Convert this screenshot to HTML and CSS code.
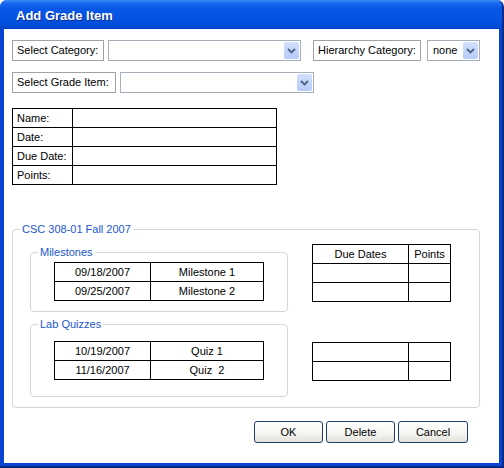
FILE: index.html
```html
<!DOCTYPE html>
<html>
<head>
  <title>Add Grade Item</title>
  <link rel="stylesheet" href="styles.css">
</head>
<body>
  <div class="window">
    <div class="title-bar">Add Grade Item</div>
    <div class="client">
      <div class="form-row">
        <span class="field-label label-category">Select Category:</span>
        <div class="combo combo-category">
          <span class="combo-value"></span>
          <span class="combo-button"><svg width="9" height="6" viewBox="0 0 9 6"><path d="M1 1 L4.5 4.5 L8 1" fill="none" stroke="#4d6185" stroke-width="1.8"/></svg></span>
        </div>
        <span class="field-label label-hierarchy">Hierarchy Category:</span>
        <div class="combo combo-hierarchy">
          <span class="combo-value">none</span>
          <span class="combo-button"><svg width="9" height="6" viewBox="0 0 9 6"><path d="M1 1 L4.5 4.5 L8 1" fill="none" stroke="#4d6185" stroke-width="1.8"/></svg></span>
        </div>
      </div>
      <div class="form-row">
        <span class="field-label label-item">Select Grade Item:</span>
        <div class="combo combo-item">
          <span class="combo-value"></span>
          <span class="combo-button"><svg width="9" height="6" viewBox="0 0 9 6"><path d="M1 1 L4.5 4.5 L8 1" fill="none" stroke="#4d6185" stroke-width="1.8"/></svg></span>
        </div>
      </div>

      <table class="grid-table item-table">
        <tr><td class="item-key">Name:</td><td></td></tr>
        <tr><td class="item-key">Date:</td><td></td></tr>
        <tr><td class="item-key">Due Date:</td><td></td></tr>
        <tr><td class="item-key">Points:</td><td></td></tr>
      </table>

      <fieldset class="group course-group">
        <legend>CSC 308-01 Fall 2007</legend>
        <div class="course-grid">
          <fieldset class="group sub-group milestones">
            <legend>Milestones</legend>
            <table class="grid-table entry-table">
              <tr><td class="entry-date">09/18/2007</td><td>Milestone 1</td></tr>
              <tr><td class="entry-date">09/25/2007</td><td>Milestone 2</td></tr>
            </table>
          </fieldset>
          <table class="grid-table side-table side-first">
            <tr><td class="side-wide">Due Dates</td><td>Points</td></tr>
            <tr><td class="side-wide"></td><td></td></tr>
            <tr><td class="side-wide"></td><td></td></tr>
          </table>
          <fieldset class="group sub-group quizzes">
            <legend>Lab Quizzes</legend>
            <table class="grid-table entry-table">
              <tr><td class="entry-date">10/19/2007</td><td>Quiz 1</td></tr>
              <tr><td class="entry-date">11/16/2007</td><td>Quiz &nbsp;2</td></tr>
            </table>
          </fieldset>
          <table class="grid-table side-table side-second">
            <tr><td class="side-wide"></td><td></td></tr>
            <tr><td class="side-wide"></td><td></td></tr>
          </table>
        </div>
      </fieldset>

      <div class="button-row">
        <button class="dialog-button btn-ok">OK</button>
        <button class="dialog-button">Delete</button>
        <button class="dialog-button btn-cancel">Cancel</button>
      </div>
    </div>
  </div>
</body>
</html>
```

FILE: styles.css
```css
/* XP style dialog */
body {
  margin: 0;
  font-family: "Liberation Sans", Arial, sans-serif;
  font-size: 11px;
  color: #000;
  background: #fff;
}

.window {
  width: 504px;
  height: 468px;
  box-sizing: border-box;
  display: flex;
  flex-direction: column;
  background: #0a45d2;
  border-right: 2px solid #0a2a8c;
  border-bottom: 2px solid #082683;
  border-radius: 7px 7px 0 0;
  overflow: hidden;
}

.title-bar {
  height: 29px;
  flex: none;
  box-sizing: border-box;
  padding: 8px 0 0 16px;
  font-size: 13px;
  font-weight: bold;
  color: #fff;
  text-shadow: 1px 1px 0 #0b2c8f;
  background: linear-gradient(to bottom, #3d8cf8 0, #1a69ef 3px, #0858e7 8px, #0554e4 60%, #044cd9 88%, #0343c8 100%);
}

.client {
  flex: 1;
  margin: 0 3px 3px 4px;
  padding: 11px 0 0 8px;
  background: #fff;
}

.form-row {
  display: flex;
  align-items: center;
  height: 21px;
  margin-bottom: 11px;
}

.field-label {
  height: 21px;
  box-sizing: border-box;
  line-height: 19px;
  padding: 0 0 0 4px;
  border: 1px solid #a2a2a2;
  white-space: nowrap;
  overflow: hidden;
}

.label-category { width: 92px; }
.label-item { width: 104px; }

.label-hierarchy {
  width: 108px;
  margin-left: 12px;
}

.combo {
  height: 21px;
  box-sizing: border-box;
  margin-left: 4px;
  display: flex;
  align-items: center;
  border: 1px solid #a6aebb;
}

.combo-category { width: 193px; }
.combo-hierarchy { width: 53px; margin-left: 6px; }
.combo-item { width: 194px; }

.combo-value {
  flex: 1;
  padding-left: 5px;
  line-height: 19px;
}

.combo-button {
  width: 15px;
  height: 17px;
  margin-right: 1px;
  display: flex;
  align-items: center;
  justify-content: center;
  border-radius: 2px;
  background: linear-gradient(to bottom, #d3e0fd, #b6cbf8);
}

.grid-table {
  border-collapse: collapse;
  border: 1px solid #3a3a3a;
}

.grid-table td {
  height: 19px;
  padding: 0 4px;
  border: 1px solid #000;
  box-sizing: border-box;
}

.item-table {
  width: 265px;
  margin-top: 15px;
}

.item-key {
  width: 60px;
}

.group {
  margin: 0;
  padding: 0;
  border: 1px solid #d6d6ce;
  border-radius: 4px;
}

.group legend {
  margin-left: 7px;
  padding: 0 2px;
  line-height: 13px;
  color: #2057cc;
}

.course-group {
  width: 468px;
  box-sizing: border-box;
  margin-top: 38px;
}

.course-grid {
  display: grid;
  grid-template-columns: 258px 139px;
  column-gap: 24px;
  align-items: start;
  margin: 0 0 10px 17px;
}

.sub-group {
  box-sizing: border-box;
  width: 258px;
}

.milestones {
  margin-top: 10px;
}

.milestones .entry-table {
  margin: 3px 23px 10px;
}

.quizzes {
  margin-top: 6px;
}

.quizzes .entry-table {
  margin: 10px 23px 16px;
}

.entry-table {
  width: 210px;
}

.entry-table td {
  text-align: center;
}

.entry-date {
  width: 96px;
}

.side-table {
  width: 139px;
}

.side-table td {
  text-align: center;
}

.side-wide {
  width: 96px;
}

.side-first {
  margin-top: 8px;
}

.side-second {
  margin-top: 30px;
}

.button-row {
  width: 468px;
  box-sizing: border-box;
  display: flex;
  justify-content: flex-end;
  gap: 3px;
  margin-top: 13px;
  padding-right: 12px;
}

.dialog-button {
  width: 69px;
  height: 22px;
  padding: 0;
  font-family: "Liberation Sans", Arial, sans-serif;
  font-size: 11px;
  color: #000;
  border: 1px solid #1d3f6e;
  border-radius: 3px;
  background: linear-gradient(to bottom, #ffffff 0, #f4f4f0 60%, #e2e0d8 100%);
}

.btn-cancel {
  width: 70px;
}
```
